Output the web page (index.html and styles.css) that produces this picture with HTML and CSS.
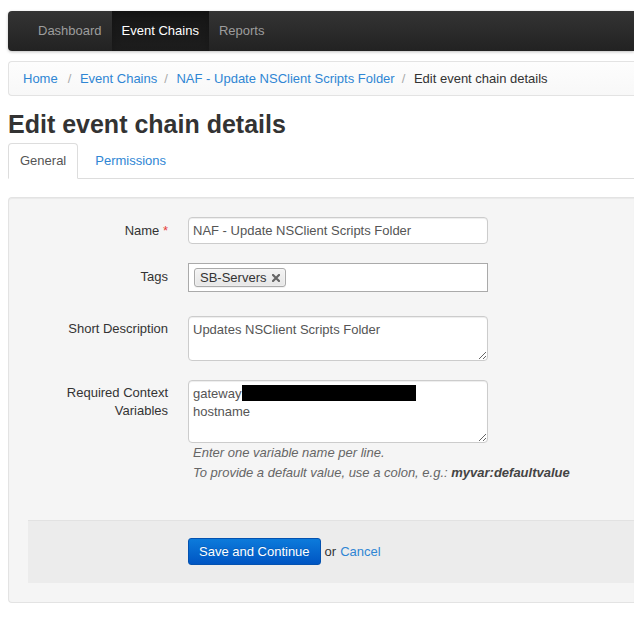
FILE: index.html
```html
<!DOCTYPE html>
<html>
<head>
<meta charset="utf-8">
<title>Edit event chain details</title>
<link rel="stylesheet" href="styles.css">
</head>
<body>
<div class="page">
  <nav class="navbar">
    <ul class="nav">
      <li><a href="#">Dashboard</a></li>
      <li class="active"><a href="#">Event Chains</a></li>
      <li><a href="#">Reports</a></li>
    </ul>
  </nav>

  <ol class="breadcrumb">
    <li class="first"><a href="#">Home</a></li>
    <li><a href="#">Event Chains</a></li>
    <li><a href="#">NAF - Update NSClient Scripts Folder</a></li>
    <li class="current">Edit event chain details</li>
  </ol>

  <h1 class="title">Edit event chain details</h1>

  <ul class="tabs">
    <li class="active"><a href="#">General</a></li>
    <li><a href="#">Permissions</a></li>
  </ul>

  <form class="well">
    <div class="row row-name">
      <label class="label">Name <span class="req">*</span></label>
      <div class="field">
        <input class="input" type="text" value="NAF - Update NSClient Scripts Folder">
      </div>
    </div>

    <div class="row row-tags">
      <label class="label">Tags</label>
      <div class="field">
        <div class="tagbox">
          <span class="chip">SB-Servers
            <svg class="chip-x" width="8" height="8" viewBox="0 0 8 8"><path d="M1 1 L7 7 M7 1 L1 7" stroke="#666" stroke-width="2.2" stroke-linecap="square"/></svg>
          </span>
        </div>
      </div>
    </div>

    <div class="row row-desc">
      <label class="label">Short Description</label>
      <div class="field">
        <textarea class="textarea short">Updates NSClient Scripts Folder</textarea>
      </div>
    </div>

    <div class="row row-vars">
      <label class="label">Required Context<br>Variables</label>
      <div class="field">
        <div class="wrap">
          <textarea class="textarea tall">gateway
hostname</textarea>
          <span class="redact"></span>
        </div>
        <p class="help">Enter one variable name per line.</p>
        <p class="help">To provide a default value, use a colon, e.g.: <b>myvar:defaultvalue</b></p>
      </div>
    </div>

    <div class="actions">
      <button type="button" class="btn">Save and Continue</button>
      <span class="or">or</span>
      <a href="#" class="cancel">Cancel</a>
    </div>
  </form>
</div>
</body>
</html>
```

FILE: styles.css
```css
html, body {
  margin: 0;
  padding: 0;
  overflow: hidden;
  background: #fff;
}

body {
  font-family: "Liberation Sans", Arial, sans-serif;
  font-size: 13px;
  line-height: 18px;
  color: #333;
}

a {
  color: #2f86d4;
  text-decoration: none;
}

.page {
  padding: 11px 0 0 8px;
}

/* navbar */
.navbar {
  height: 40px;
  border-radius: 4px 0 0 4px;
  background: linear-gradient(to bottom, #343434 0%, #222 100%);
  box-shadow: 0 1px 3px rgba(0, 0, 0, 0.25);
  padding-left: 20px;
}

.nav {
  display: flex;
  margin: 0;
  padding: 0;
  list-style: none;
}

.nav a {
  display: block;
  padding: 11px 10px 11px;
  line-height: 18px;
  color: #9d9d9d;
}

.nav .active a {
  color: #fff;
  background: linear-gradient(to bottom, #161616 0%, #1d1d1d 100%);
  box-shadow: inset 0 3px 9px rgba(0, 0, 0, 0.2);
}

/* breadcrumb */
.breadcrumb {
  display: flex;
  margin: 10px 0 0;
  padding: 8px 14px;
  line-height: 17px;
  list-style: none;
  border: 1px solid #e3e3e3;
  border-right: 0;
  border-radius: 4px 0 0 4px;
  background: linear-gradient(to bottom, #fdfdfd 0%, #f8f8f8 100%);
  white-space: nowrap;
}

.breadcrumb li + li::before {
  content: "/\00a0";
  padding: 0 5px 0 6px;
  color: #aaa;
}

.breadcrumb li + li {
  padding-left: 1px;
}

.breadcrumb .first {
  margin-right: 3px;
}

.breadcrumb .current {
  color: #333;
}

/* title */
.title {
  margin: 14px 0 5px;
  font-size: 25px;
  line-height: 28px;
  font-weight: bold;
  color: #333;
}

/* tabs */
.tabs {
  display: flex;
  margin: 0;
  padding: 0;
  list-style: none;
  border-bottom: 1px solid #ddd;
}

.tabs li {
  margin-right: 5px;
  margin-bottom: -1px;
}

.tabs a {
  display: block;
  padding: 8px 11px;
  line-height: 18px;
  border: 1px solid transparent;
  border-radius: 4px 4px 0 0;
  color: #2f86d4;
}

.tabs .active a {
  color: #555;
  background: #fff;
  border-color: #ddd #ddd transparent;
}

/* well / form */
.well {
  margin: 18px 0 0;
  padding: 19px 0 19px 19px;
  background: #f5f5f5;
  border: 1px solid #e3e3e3;
  border-right: 0;
  border-radius: 4px 0 0 4px;
  box-shadow: inset 0 1px 1px rgba(0, 0, 0, 0.05);
}

.row {
  display: grid;
  grid-template-columns: 140px 300px;
  column-gap: 20px;
  align-items: start;
}

.row-name { margin-bottom: 19px; }
.row-tags { margin-bottom: 24px; }
.row-desc { margin-bottom: 19px; }
.row-vars { margin-bottom: 37px; }

.label {
  text-align: right;
  padding-top: 4px;
  line-height: 18px;
  color: #333;
}

.row-name .label,
.row-tags .label {
  padding-top: 5px;
}

.req {
  color: #e5403a;
}

.input,
.textarea {
  display: block;
  box-sizing: border-box;
  width: 300px;
  margin: 0;
  font-family: "Liberation Sans", Arial, sans-serif;
  font-size: 13px;
  color: #555;
  background: #fff;
  border: 1px solid #ccc;
  border-radius: 4px;
  box-shadow: inset 0 1px 1px rgba(0, 0, 0, 0.075);
  outline: none;
}

.input {
  height: 27px;
  padding: 4px 4px;
  line-height: 17px;
}

.textarea {
  padding: 4px 4px 3px;
  line-height: 18px;
  resize: vertical;
}

.textarea.short { height: 45px; }
.textarea.tall { height: 63px; }

.tagbox {
  box-sizing: border-box;
  width: 300px;
  height: 29px;
  padding: 4px 5px;
  background: #fff;
  border: 1px solid #aaa;
  display: flex;
  align-items: flex-start;
}

.chip {
  display: inline-flex;
  align-items: center;
  height: 17px;
  padding: 0 5px 0 5px;
  line-height: 17px;
  color: #333;
  border: 1px solid #aaa;
  border-radius: 3px;
  background: linear-gradient(to bottom, #f4f4f4 0%, #e6e6e6 100%);
  box-shadow: 0 0 2px #fff inset, 0 1px 0 rgba(0, 0, 0, 0.05);
}

.chip-x {
  margin-left: 6px;
}

.wrap {
  position: relative;
  width: 300px;
}

.redact {
  position: absolute;
  left: 54px;
  top: 5px;
  width: 174px;
  height: 16px;
  background: #000;
}

.help {
  margin: 0;
  padding-left: 5px;
  line-height: 20px;
  font-style: italic;
  color: #666;
  white-space: nowrap;
}

.help b {
  color: #444;
}

/* actions */
.actions {
  display: flex;
  align-items: center;
  padding: 17px 0 18px 160px;
  background: #ececec;
  border-top: 1px solid #e2e2e2;
}

.btn {
  box-sizing: border-box;
  height: 27px;
  padding: 0 10px;
  margin: 0;
  font-family: "Liberation Sans", Arial, sans-serif;
  font-size: 13px;
  line-height: 18px;
  color: #fff;
  background: linear-gradient(to bottom, #0c7bdb 0%, #0055c3 100%);
  border: 1px solid #0452b0;
  border-radius: 3px;
  text-shadow: 0 -1px 0 rgba(0, 0, 0, 0.15);
}

.or {
  margin-left: 4px;
  color: #333;
}

.cancel {
  margin-left: 4px;
}
```
